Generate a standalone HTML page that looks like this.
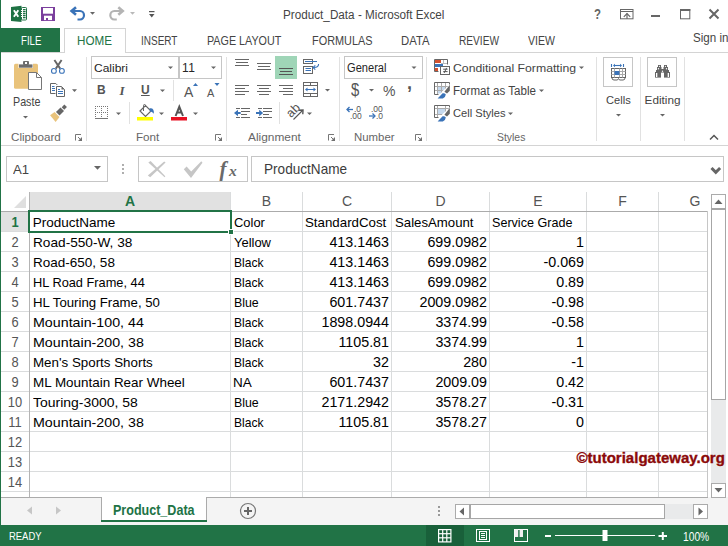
<!DOCTYPE html>
<html><head><meta charset="utf-8">
<style>
*{margin:0;padding:0;box-sizing:border-box}
html,body{width:728px;height:546px;overflow:hidden;background:#fff;position:relative;font-family:"Liberation Sans",sans-serif}
.a{position:absolute}
.t{position:absolute;white-space:nowrap;line-height:1;transform-origin:0 0}
.sep{position:absolute;width:1px;background:#e1e1e1}
.gl{position:absolute;background:#dadcdd}
.arr{position:absolute;width:0;height:0;border-left:3px solid transparent;border-right:3px solid transparent;border-top:3px solid #777}
.c{position:absolute;white-space:nowrap;font-size:13.5px;color:#000;line-height:20px;height:20px}
.n{font-size:14px;text-align:right}
.rh{position:absolute;left:1px;width:28px;text-align:center;font-size:14px;color:#555;line-height:20px;height:20px;transform:scaleX(0.92)}
.ch{position:absolute;top:192px;height:19px;text-align:center;font-size:14px;color:#555;line-height:19px}
.lbl{position:absolute;font-size:11.5px;color:#666;white-space:nowrap;line-height:1}
</style></head><body>
<!-- left window border -->
<div class="a" style="left:0;top:0;width:1px;height:546px;background:#217346;z-index:5"></div>

<!-- TITLE BAR -->

<!-- TABS -->
<div class="a" style="left:0;top:28px;width:60px;height:25px;background:#217346"></div>
<div class="a" style="left:64px;top:28px;width:62px;height:25px;border:1px solid #d4d4d4;border-bottom:none;background:#fff;z-index:2"></div>

<!-- RIBBON -->
<div class="a" style="left:1px;top:52px;width:727px;height:1px;background:#d4d4d4"></div>
<div class="a" style="left:1px;top:145px;width:727px;height:1px;background:#d4d4d4"></div>
<div class="sep" style="left:86px;top:57px;height:84px"></div>
<div class="sep" style="left:226px;top:57px;height:84px"></div>
<div class="sep" style="left:339px;top:57px;height:84px"></div>
<div class="sep" style="left:426px;top:57px;height:84px"></div>
<div class="sep" style="left:596px;top:57px;height:84px"></div>
<div class="sep" style="left:640px;top:57px;height:84px"></div>
<div class="sep" style="left:684px;top:57px;height:84px"></div>


<!-- RIBBON TEXT -->
<div class="t" style="left:97px;top:84px;font-size:12px;font-weight:bold;color:#555;z-index:7">B</div>
<div class="t" style="left:119.5px;top:84px;font-size:13px;font-style:italic;font-weight:bold;font-family:'Liberation Serif',serif;color:#555;z-index:7">I</div>
<div class="t" style="left:141px;top:84px;font-size:12px;font-weight:bold;color:#555;z-index:7;text-decoration:underline">U</div>
<div class="t" style="left:184px;top:85px;font-size:14px;color:#555;z-index:7">A</div>
<div class="t" style="left:207px;top:88px;font-size:11px;color:#555;z-index:7">A</div>
<div class="t" style="left:350.5px;top:80px;font-size:19px;color:#555;z-index:7;transform:scaleX(0.78);transform-origin:0 0">$</div>
<div class="t" style="left:383px;top:84px;font-size:14px;color:#555;z-index:7">%</div>
<div class="t" style="left:407px;top:74px;font-size:18px;font-weight:bold;color:#555;z-index:7">,</div>
<div class="t" style="left:354px;top:105px;font-size:8.5px;color:#555;z-index:7">.0</div>
<div class="t" style="left:350px;top:112px;font-size:8.5px;color:#555;z-index:7">.00</div>
<div class="t" style="left:371px;top:105px;font-size:8.5px;color:#555;z-index:7">.00</div>
<div class="t" style="left:376px;top:112px;font-size:8.5px;color:#555;z-index:7">.0</div>

<div class="t" style="left:182px;top:62px;font-size:12px;letter-spacing:0.4px;color:#262626;z-index:7">11</div>
<!-- FORMULA BAR -->
<div class="a" style="left:6px;top:156px;width:102px;height:26px;border:1px solid #c6c6c6"></div>
<div class="a" style="left:138px;top:156px;width:110px;height:26px;border:1px solid #c6c6c6"></div>
<div class="a" style="left:251px;top:156px;width:473px;height:26px;border:1px solid #c6c6c6"></div>

<!-- GRID -->
<div id="grid">
<div class="a" style="left:30px;top:192px;width:200px;height:18px;background:#e1e1e1"></div>
<div class="a" style="left:30px;top:210px;width:200px;height:2px;background:#217346;z-index:3"></div>
<svg class="a" style="left:14px;top:196px" width="12" height="12"><polygon points="12,0 12,12 0,12" fill="#dfdfdf"/></svg>
<div class="a" style="left:1px;top:211px;width:706px;height:1px;background:#ababab"></div>
<div class="a" style="left:230px;top:192px;width:1px;height:19px;background:#dadcdd"></div>
<div class="a" style="left:302px;top:192px;width:1px;height:19px;background:#dadcdd"></div>
<div class="a" style="left:391px;top:192px;width:1px;height:19px;background:#dadcdd"></div>
<div class="a" style="left:489px;top:192px;width:1px;height:19px;background:#dadcdd"></div>
<div class="a" style="left:586px;top:192px;width:1px;height:19px;background:#dadcdd"></div>
<div class="a" style="left:658px;top:192px;width:1px;height:19px;background:#dadcdd"></div>
<div class="a" style="left:29px;top:192px;width:1px;height:305px;background:#b4b4b4;z-index:2"></div>
<div class="a" style="left:1px;top:212px;width:28px;height:19px;background:#e1e1e1"></div>
<div class="ch" style="left:30px;width:200px;color:#217346;font-weight:bold">A</div>
<div class="ch" style="left:231px;width:71px;">B</div>
<div class="ch" style="left:303px;width:88px;">C</div>
<div class="ch" style="left:392px;width:97px;">D</div>
<div class="ch" style="left:490px;width:96px;">E</div>
<div class="ch" style="left:587px;width:71px;">F</div>
<div class="ch" style="left:659px;width:72px;">G</div>
<div class="gl" style="left:1px;top:231px;width:706px;height:1px"></div>
<div class="gl" style="left:1px;top:251px;width:706px;height:1px"></div>
<div class="gl" style="left:1px;top:271px;width:706px;height:1px"></div>
<div class="gl" style="left:1px;top:291px;width:706px;height:1px"></div>
<div class="gl" style="left:1px;top:311px;width:706px;height:1px"></div>
<div class="gl" style="left:1px;top:331px;width:706px;height:1px"></div>
<div class="gl" style="left:1px;top:351px;width:706px;height:1px"></div>
<div class="gl" style="left:1px;top:371px;width:706px;height:1px"></div>
<div class="gl" style="left:1px;top:391px;width:706px;height:1px"></div>
<div class="gl" style="left:1px;top:411px;width:706px;height:1px"></div>
<div class="gl" style="left:1px;top:431px;width:706px;height:1px"></div>
<div class="gl" style="left:1px;top:451px;width:706px;height:1px"></div>
<div class="gl" style="left:1px;top:471px;width:706px;height:1px"></div>
<div class="gl" style="left:1px;top:491px;width:706px;height:1px"></div>
<div class="gl" style="left:230px;top:212px;width:1px;height:285px"></div>
<div class="gl" style="left:302px;top:212px;width:1px;height:285px"></div>
<div class="gl" style="left:391px;top:212px;width:1px;height:285px"></div>
<div class="gl" style="left:489px;top:212px;width:1px;height:285px"></div>
<div class="gl" style="left:586px;top:212px;width:1px;height:285px"></div>
<div class="gl" style="left:658px;top:212px;width:1px;height:285px"></div>
<div class="a" style="left:707px;top:211px;width:1px;height:286px;background:#c6c6c6"></div>
<div class="rh" style="top:212px;color:#217346;font-weight:bold">1</div>
<div class="rh" style="top:232px;">2</div>
<div class="rh" style="top:252px;">3</div>
<div class="rh" style="top:272px;">4</div>
<div class="rh" style="top:292px;">5</div>
<div class="rh" style="top:312px;">6</div>
<div class="rh" style="top:332px;">7</div>
<div class="rh" style="top:352px;">8</div>
<div class="rh" style="top:372px;">9</div>
<div class="rh" style="top:392px;">10</div>
<div class="rh" style="top:412px;">11</div>
<div class="rh" style="top:432px;">12</div>
<div class="rh" style="top:452px;">13</div>
<div class="rh" style="top:472px;">14</div>
<div class="c" style="left:32.80px;top:213px;transform:scaleX(1.000);transform-origin:0 0">ProductName</div>
<div class="c" style="left:233.70px;top:213px;transform:scaleX(0.957);transform-origin:0 0">Color</div>
<div class="c" style="left:304.90px;top:213px;transform:scaleX(0.985);transform-origin:0 0">StandardCost</div>
<div class="c" style="left:394.50px;top:213px;transform:scaleX(0.978);transform-origin:0 0">SalesAmount</div>
<div class="c" style="left:492.10px;top:213px;transform:scaleX(0.932);transform-origin:0 0">Service Grade</div>
<div class="c" style="left:32.60px;top:233px;transform:scaleX(1.011);transform-origin:0 0">Road-550-W, 38</div>
<div class="c" style="left:233.70px;top:233px;transform:scaleX(0.959);transform-origin:0 0">Yellow</div>
<div class="c n" style="left:303px;width:86px;top:232px;transform:scaleX(1.02);transform-origin:100% 0">413.1463</div>
<div class="c n" style="left:392px;width:95px;top:232px;transform:scaleX(1.02);transform-origin:100% 0">699.0982</div>
<div class="c n" style="left:490px;width:94px;top:232px;transform:scaleX(1.02);transform-origin:100% 0">1</div>
<div class="c" style="left:32.60px;top:253px;transform:scaleX(1.001);transform-origin:0 0">Road-650, 58</div>
<div class="c" style="left:233.70px;top:253px;transform:scaleX(0.894);transform-origin:0 0">Black</div>
<div class="c n" style="left:303px;width:86px;top:252px;transform:scaleX(1.02);transform-origin:100% 0">413.1463</div>
<div class="c n" style="left:392px;width:95px;top:252px;transform:scaleX(1.02);transform-origin:100% 0">699.0982</div>
<div class="c n" style="left:490px;width:94px;top:252px;transform:scaleX(1.02);transform-origin:100% 0">-0.069</div>
<div class="c" style="left:32.60px;top:273px;transform:scaleX(0.947);transform-origin:0 0">HL Road Frame, 44</div>
<div class="c" style="left:233.70px;top:273px;transform:scaleX(0.894);transform-origin:0 0">Black</div>
<div class="c n" style="left:303px;width:86px;top:272px;transform:scaleX(1.02);transform-origin:100% 0">413.1463</div>
<div class="c n" style="left:392px;width:95px;top:272px;transform:scaleX(1.02);transform-origin:100% 0">699.0982</div>
<div class="c n" style="left:490px;width:94px;top:272px;transform:scaleX(1.02);transform-origin:100% 0">0.89</div>
<div class="c" style="left:32.60px;top:293px;transform:scaleX(0.978);transform-origin:0 0">HL Touring Frame, 50</div>
<div class="c" style="left:233.70px;top:293px;transform:scaleX(0.915);transform-origin:0 0">Blue</div>
<div class="c n" style="left:303px;width:86px;top:292px;transform:scaleX(1.02);transform-origin:100% 0">601.7437</div>
<div class="c n" style="left:392px;width:95px;top:292px;transform:scaleX(1.02);transform-origin:100% 0">2009.0982</div>
<div class="c n" style="left:490px;width:94px;top:292px;transform:scaleX(1.02);transform-origin:100% 0">-0.98</div>
<div class="c" style="left:32.60px;top:313px;transform:scaleX(1.055);transform-origin:0 0">Mountain-100, 44</div>
<div class="c" style="left:233.70px;top:313px;transform:scaleX(0.894);transform-origin:0 0">Black</div>
<div class="c n" style="left:303px;width:86px;top:312px;transform:scaleX(1.02);transform-origin:100% 0">1898.0944</div>
<div class="c n" style="left:392px;width:95px;top:312px;transform:scaleX(1.02);transform-origin:100% 0">3374.99</div>
<div class="c n" style="left:490px;width:94px;top:312px;transform:scaleX(1.02);transform-origin:100% 0">-0.58</div>
<div class="c" style="left:32.60px;top:333px;transform:scaleX(1.055);transform-origin:0 0">Mountain-200, 38</div>
<div class="c" style="left:233.70px;top:333px;transform:scaleX(0.894);transform-origin:0 0">Black</div>
<div class="c n" style="left:303px;width:86px;top:332px;transform:scaleX(1.02);transform-origin:100% 0">1105.81</div>
<div class="c n" style="left:392px;width:95px;top:332px;transform:scaleX(1.02);transform-origin:100% 0">3374.99</div>
<div class="c n" style="left:490px;width:94px;top:332px;transform:scaleX(1.02);transform-origin:100% 0">1</div>
<div class="c" style="left:32.60px;top:353px;transform:scaleX(0.989);transform-origin:0 0">Men's Sports Shorts</div>
<div class="c" style="left:233.70px;top:353px;transform:scaleX(0.894);transform-origin:0 0">Black</div>
<div class="c n" style="left:303px;width:86px;top:352px;transform:scaleX(1.02);transform-origin:100% 0">32</div>
<div class="c n" style="left:392px;width:95px;top:352px;transform:scaleX(1.02);transform-origin:100% 0">280</div>
<div class="c n" style="left:490px;width:94px;top:352px;transform:scaleX(1.02);transform-origin:100% 0">-1</div>
<div class="c" style="left:32.60px;top:373px;transform:scaleX(0.995);transform-origin:0 0">ML Mountain Rear Wheel</div>
<div class="c" style="left:233px;top:373px">NA</div>
<div class="c n" style="left:303px;width:86px;top:372px;transform:scaleX(1.02);transform-origin:100% 0">601.7437</div>
<div class="c n" style="left:392px;width:95px;top:372px;transform:scaleX(1.02);transform-origin:100% 0">2009.09</div>
<div class="c n" style="left:490px;width:94px;top:372px;transform:scaleX(1.02);transform-origin:100% 0">0.42</div>
<div class="c" style="left:32.60px;top:393px;transform:scaleX(1.034);transform-origin:0 0">Touring-3000, 58</div>
<div class="c" style="left:233.70px;top:393px;transform:scaleX(0.915);transform-origin:0 0">Blue</div>
<div class="c n" style="left:303px;width:86px;top:392px;transform:scaleX(1.02);transform-origin:100% 0">2171.2942</div>
<div class="c n" style="left:392px;width:95px;top:392px;transform:scaleX(1.02);transform-origin:100% 0">3578.27</div>
<div class="c n" style="left:490px;width:94px;top:392px;transform:scaleX(1.02);transform-origin:100% 0">-0.31</div>
<div class="c" style="left:32.60px;top:413px;transform:scaleX(1.055);transform-origin:0 0">Mountain-200, 38</div>
<div class="c" style="left:233.70px;top:413px;transform:scaleX(0.894);transform-origin:0 0">Black</div>
<div class="c n" style="left:303px;width:86px;top:412px;transform:scaleX(1.02);transform-origin:100% 0">1105.81</div>
<div class="c n" style="left:392px;width:95px;top:412px;transform:scaleX(1.02);transform-origin:100% 0">3578.27</div>
<div class="c n" style="left:490px;width:94px;top:412px;transform:scaleX(1.02);transform-origin:100% 0">0</div>
<div class="a" style="left:28px;top:210px;width:204px;height:23px;border:2px solid #217346;z-index:4"></div>
<div class="a" style="left:228px;top:229px;width:6px;height:6px;background:#217346;border:1px solid #fff;z-index:5"></div>
</div>
<!-- SHEET TABS -->
<div class="a" style="left:1px;top:497px;width:727px;height:28px;background:#f4f4f4"></div>
<div class="a" style="left:1px;top:497px;width:707px;height:1px;background:#ababab"></div>
<div class="a" style="left:708px;top:192px;width:20px;height:305px;background:#fff"></div>
<div class="a" style="left:101px;top:497px;width:106px;height:25px;background:#fff;border-right:1px solid #ababab;border-left:1px solid #ababab;border-top:none"></div>
<div class="a" style="left:101px;top:520px;width:106px;height:2px;background:#217346"></div>
<div class="a" style="left:230px;top:492px;width:1px;height:5px;background:#dadcdd"></div>
<!-- v scrollbar -->
<div class="a" style="left:711px;top:194px;width:15px;height:304px;background:#e9eaeb"></div>
<div class="a" style="left:711px;top:194px;width:15px;height:15px;background:#fff;border:1px solid #ababab"></div>
<div class="a" style="left:711px;top:208px;width:15px;height:192px;background:#fff;border:1px solid #a6a6a6;border-width:2px 1px 1px 1px"></div>
<div class="a" style="left:711px;top:483px;width:15px;height:15px;background:#fff;border:1px solid #ababab"></div>
<!-- h scrollbar -->
<div class="a" style="left:455px;top:504px;width:253px;height:15px;background:#e9eaeb"></div>
<div class="a" style="left:455px;top:504px;width:15px;height:15px;background:#fff;border:1px solid #ababab"></div>
<div class="a" style="left:469px;top:504px;width:196px;height:15px;background:#fff;border:1px solid #a6a6a6;border-width:1px 1px 1px 2px"></div>
<div class="a" style="left:693px;top:504px;width:15px;height:15px;background:#fff;border:1px solid #ababab"></div>

<!-- STATUS BAR -->
<div class="a" style="left:0;top:525px;width:728px;height:21px;background:#217346"></div>
<div class="a" style="left:426px;top:525px;width:38px;height:21px;background:#19603a"></div>
<!--TEXT-->
<div class="t" style="left:283.00px;top:8px;font-size:13.25px;color:#444;z-index:7;transform:scaleX(0.884);">Product_Data - Microsoft Excel</div>
<div class="t" style="left:594.00px;top:7px;font-size:14.5px;font-weight:bold;color:#666;z-index:7;transform:scaleX(0.791);">?</div>
<div class="t" style="left:20.60px;top:35px;font-size:12.5px;color:#fff;z-index:7;transform:scaleX(0.770);">FILE</div>
<div class="t" style="left:77.00px;top:34px;font-size:13.0px;color:#217346;z-index:7;transform:scaleX(0.897);">HOME</div>
<div class="t" style="left:141.00px;top:34px;font-size:13.0px;color:#444;z-index:7;transform:scaleX(0.769);">INSERT</div>
<div class="t" style="left:207.00px;top:34px;font-size:13.0px;color:#444;z-index:7;transform:scaleX(0.827);">PAGE LAYOUT</div>
<div class="t" style="left:311.50px;top:34px;font-size:13.0px;color:#444;z-index:7;transform:scaleX(0.838);">FORMULAS</div>
<div class="t" style="left:401.00px;top:34px;font-size:13.0px;color:#444;z-index:7;transform:scaleX(0.873);">DATA</div>
<div class="t" style="left:458.80px;top:34px;font-size:13.0px;color:#444;z-index:7;transform:scaleX(0.780);">REVIEW</div>
<div class="t" style="left:527.70px;top:34px;font-size:13.0px;color:#444;z-index:7;transform:scaleX(0.810);">VIEW</div>
<div class="t" style="left:693.00px;top:31px;font-size:13.0px;color:#444;z-index:7;transform:scaleX(0.892);">Sign in</div>
<div class="t" style="left:12.50px;top:96px;font-size:12.75px;color:#444;z-index:7;transform:scaleX(0.841);">Paste</div>
<div class="t" style="left:10.60px;top:131px;font-size:11.75px;color:#666;z-index:7;transform:scaleX(0.990);">Clipboard</div>
<div class="t" style="left:136.40px;top:131px;font-size:11.75px;color:#666;z-index:7;transform:scaleX(0.991);">Font</div>
<div class="t" style="left:247.90px;top:131px;font-size:11.75px;color:#666;z-index:7;transform:scaleX(1.011);">Alignment</div>
<div class="t" style="left:354.30px;top:131px;font-size:11.75px;color:#666;z-index:7;transform:scaleX(0.970);">Number</div>
<div class="t" style="left:497.10px;top:131px;font-size:11.75px;color:#666;z-index:7;transform:scaleX(0.887);">Styles</div>
<div class="t" style="left:94.00px;top:62px;font-size:11.75px;color:#262626;z-index:7;transform:scaleX(1.021);">Calibri</div>
<div class="t" style="left:347.30px;top:62px;font-size:12.0px;color:#262626;z-index:7;transform:scaleX(0.925);">General</div>
<div class="t" style="left:453.40px;top:62px;font-size:11.75px;color:#444;z-index:7;transform:scaleX(1.041);">Conditional Formatting</div>
<div class="t" style="left:453.40px;top:84px;font-size:13.25px;color:#444;z-index:7;transform:scaleX(0.875);">Format as Table</div>
<div class="t" style="left:453.40px;top:107px;font-size:11.75px;color:#444;z-index:7;transform:scaleX(0.947);">Cell Styles</div>
<div class="t" style="left:606.10px;top:94px;font-size:11.75px;color:#444;z-index:7;transform:scaleX(0.945);">Cells</div>
<div class="t" style="left:644.60px;top:94px;font-size:11.75px;color:#444;z-index:7;">Editing</div>
<div class="t" style="left:13.20px;top:163px;font-size:13.25px;color:#444;z-index:7;transform:scaleX(0.992);">A1</div>
<div class="t" style="left:263.90px;top:163px;font-size:13.75px;color:#3c3c3c;z-index:7;transform:scaleX(0.988);">ProductName</div>
<div class="t" style="left:8.50px;top:531px;font-size:11.0px;color:#fff;z-index:7;transform:scaleX(0.858);">READY</div>
<div class="t" style="left:682.80px;top:530px;font-size:13.0px;color:#fff;z-index:7;transform:scaleX(0.787);">100%</div>
<div class="t" style="left:113.40px;top:502px;font-size:15.0px;font-weight:bold;color:#217346;z-index:7;transform:scaleX(0.836);">Product_Data</div>
<div class="t" style="left:576.50px;top:450px;font-size:15.0px;font-weight:bold;color:#8b0a0a;z-index:9;-webkit-text-stroke:0.35px #8b0a0a;">©tutorialgateway.org</div>
<!--/TEXT-->
<!--ICONS-->
<svg class="a" style="left:0;top:0;z-index:6" width="728" height="546" viewBox="0 0 728 546">
<!-- Excel icon -->
<rect x="21.5" y="7.5" width="5" height="12.5" rx="0.8" fill="#fff" stroke="#1f7244" stroke-width="1"/>
<polygon points="11,7 21.5,5.8 21.5,22 11,21" fill="#1f7244"/>
<g fill="#1f7244"><rect x="23" y="9" width="2.6" height="1.3"/><rect x="23" y="11" width="2.6" height="1.3"/><rect x="23" y="13" width="2.6" height="1.3"/><rect x="23" y="15" width="2.6" height="1.3"/><rect x="23" y="17" width="2.6" height="1.3"/></g>
<g fill="#fff"><rect x="21" y="10" width="1" height="1"/><rect x="21" y="12" width="1" height="1"/><rect x="21" y="14" width="1" height="1"/><rect x="21" y="16" width="1" height="1"/></g>
<path d="M13.9,10.2 L18.3,16.8 M18.3,10.2 L13.9,16.8" stroke="#fff" stroke-width="1.9"/>
<!-- Save -->
<rect x="41" y="7" width="14" height="14" fill="#7b3f9d"/>
<rect x="43" y="8" width="10" height="5.7" fill="#fff"/>
<rect x="44" y="15.7" width="8" height="4.4" fill="#fff"/>
<rect x="46" y="18" width="2" height="2.1" fill="#7b3f9d"/>
<!-- Undo -->
<path d="M72,11 L80,11 A4,4.25 0 0 1 80,19.5 L77.5,19.5" fill="none" stroke="#3a73b8" stroke-width="2.2"/>
<polyline points="76,7.3 71.6,11 76,14.7" fill="none" stroke="#3a73b8" stroke-width="2.6" stroke-linejoin="miter"/>
<polygon points="90,12 95,12 92.5,14.8" fill="#666"/>
<!-- Redo -->
<path d="M122.3,11 L114.3,11 A4,4.25 0 0 0 114.3,19.5 L116.8,19.5" fill="none" stroke="#b4b4b4" stroke-width="2.2"/>
<polyline points="118.3,7.3 122.7,11 118.3,14.7" fill="none" stroke="#b4b4b4" stroke-width="2.6" stroke-linejoin="miter"/>
<polygon points="130,12 135,12 132.5,14.8" fill="#b9b9b9"/>
<!-- customize -->
<rect x="149" y="11" width="5.5" height="1.2" fill="#555"/>
<polygon points="149,14 154.5,14 151.75,17.5" fill="#555"/>
<!-- window controls -->
<rect x="620.5" y="9.5" width="12.5" height="9.3" fill="none" stroke="#666" stroke-width="1"/>
<line x1="620.5" y1="11.5" x2="633" y2="11.5" stroke="#666" stroke-width="1"/>
<line x1="627" y1="13.5" x2="627" y2="18.8" stroke="#666" stroke-width="1.2"/>
<polyline points="623.8,16.8 627,13.5 630.2,16.8" fill="none" stroke="#666" stroke-width="1.2"/>
<rect x="651" y="15" width="9" height="2" fill="#666"/>
<rect x="680.5" y="9.5" width="9.3" height="9.3" fill="none" stroke="#666" stroke-width="1"/>
<rect x="680" y="9" width="10.3" height="2" fill="#666"/>
<path d="M709.5,9.5 L718.5,18.5 M718.5,9.5 L709.5,18.5" stroke="#666" stroke-width="2"/>
<!-- Clipboard paste -->
<rect x="14" y="63.7" width="24" height="25" rx="1.5" fill="#e9c37b"/>
<rect x="18.5" y="61" width="14.5" height="7" fill="#fff"/>
<rect x="19" y="64.4" width="13.5" height="3.3" fill="#6d6d6d"/>
<rect x="23" y="61" width="6" height="4" rx="1" fill="#6d6d6d"/>
<rect x="25" y="62" width="2" height="2" fill="#fff"/>
<path d="M28.5,72.5 L36.5,72.5 L41.5,77.5 L41.5,89.5 L28.5,89.5 Z" fill="#fff" stroke="#777" stroke-width="1"/>
<path d="M36.5,72.5 L36.5,77.5 L41.5,77.5" fill="none" stroke="#777" stroke-width="1"/>
<!-- scissors -->
<path d="M54.4,60 L60.2,68.6 M61.6,60 L55.8,68.6" stroke="#666" stroke-width="1.9"/>
<circle cx="53.9" cy="70.9" r="2.4" fill="#fff" stroke="#3a73b8" stroke-width="1.1"/>
<circle cx="61.9" cy="70.9" r="2.4" fill="#fff" stroke="#3a73b8" stroke-width="1.1"/>
<!-- copy -->
<path d="M55.5,93.5 H50.5 V83.5 H55.8 L57.3,85" fill="none" stroke="#666" stroke-width="1"/>
<path d="M56.5,86.5 H61.5 L64.5,89.5 V96.5 H56.5 Z" fill="#fff" stroke="#666" stroke-width="1"/>
<polygon points="61.5,86.5 64.5,89.5 61.5,89.5" fill="#666"/>
<g stroke="#3a73b8" stroke-width="1"><line x1="52" y1="86.5" x2="54.5" y2="86.5"/><line x1="52" y1="88.5" x2="55" y2="88.5"/><line x1="52" y1="90.5" x2="55" y2="90.5"/><line x1="58" y1="89.5" x2="60" y2="89.5"/><line x1="58" y1="91.5" x2="63" y2="91.5"/><line x1="58" y1="93.5" x2="63" y2="93.5"/></g>
<polygon points="72,89.3 77,89.3 74.5,92" fill="#666"/>
<!-- format painter -->
<g transform="rotate(-45 60 111.5)">
<rect x="56.8" y="109" width="6.4" height="5" fill="#666"/>
<rect x="64.2" y="109.7" width="3.8" height="3.6" fill="#666"/>
<polygon points="55.8,108 55.8,115 49.5,115.8 50.3,107.2" fill="#e9c37b"/>
</g>
<polygon points="23,116 28,116 25.5,118.5" fill="#666"/>
<!-- Font group: dropdown boxes -->
<rect x="91.5" y="56.5" width="87" height="22" fill="#fff" stroke="#c6c6c6"/>
<rect x="178.5" y="56.5" width="43" height="22" fill="#fff" stroke="#c6c6c6"/><line x1="179.5" y1="57" x2="179.5" y2="78" stroke="#c6c6c6"/>
<polygon points="168,66.5 173,66.5 170.5,69" fill="#666"/>
<polygon points="211,66.5 216,66.5 213.5,69" fill="#666"/>
<polygon points="160,89.5 165,89.5 162.5,92" fill="#666"/>
<line x1="173.5" y1="80" x2="173.5" y2="101" stroke="#e1e1e1"/>
<polygon points="193,86 198,86 195.5,83" fill="#3a73b8"/>
<polygon points="214.5,83 219.5,83 217,86" fill="#3a73b8"/>
<!-- borders icon -->
<g fill="#777"><rect x="95" y="106" width="1" height="1"/><rect x="97" y="106" width="1" height="1"/><rect x="99" y="106" width="1" height="1"/><rect x="101" y="106" width="1" height="1"/><rect x="103" y="106" width="1" height="1"/><rect x="105" y="106" width="1" height="1"/><rect x="107" y="106" width="1" height="1"/>
<rect x="95" y="112" width="1" height="1"/><rect x="97" y="112" width="1" height="1"/><rect x="99" y="112" width="1" height="1"/><rect x="101" y="112" width="1" height="1"/><rect x="103" y="112" width="1" height="1"/><rect x="105" y="112" width="1" height="1"/><rect x="107" y="112" width="1" height="1"/>
<rect x="95" y="108" width="1" height="1"/><rect x="95" y="110" width="1" height="1"/><rect x="95" y="114" width="1" height="1"/><rect x="95" y="116" width="1" height="1"/>
<rect x="101" y="108" width="1" height="1"/><rect x="101" y="110" width="1" height="1"/><rect x="101" y="114" width="1" height="1"/><rect x="101" y="116" width="1" height="1"/>
<rect x="107" y="108" width="1" height="1"/><rect x="107" y="110" width="1" height="1"/><rect x="107" y="114" width="1" height="1"/><rect x="107" y="116" width="1" height="1"/>
<rect x="95" y="118" width="13" height="1"/></g>
<polygon points="116,112.5 121,112.5 118.5,115" fill="#666"/>
<line x1="129.5" y1="102" x2="129.5" y2="124" stroke="#e1e1e1"/>
<!-- fill color -->
<path d="M140,111 L145.5,105.5 L151,111 L145.5,116.5 Z" fill="#fff" stroke="#666" stroke-width="1.2"/>
<path d="M143.5,111 V105.5 Q143.5,104.5 144.5,104.5 Q145.5,104.5 145.5,105.5 V107" fill="none" stroke="#666" stroke-width="1"/>
<path d="M149.5,108.3 Q154.5,107.5 153.8,113.8 Q151.5,111 150,111.5 Z" fill="#3a73b8"/>
<rect x="137" y="117" width="16" height="3.5" fill="#ffff00"/>
<polygon points="159,112.5 164,112.5 161.5,115" fill="#666"/>
<!-- font color -->
<path d="M175.6,116 L179.3,106.8 L183,116 M177,112.6 L181.6,112.6" fill="none" stroke="#555" stroke-width="2"/>
<rect x="171" y="117" width="16" height="3.5" fill="#e81123"/>
<polygon points="193,112.5 198,112.5 195.5,115" fill="#666"/>
<!-- Alignment group -->
<g stroke="#666" stroke-width="1">
<line x1="235" y1="59.5" x2="249" y2="59.5"/><line x1="236" y1="62.5" x2="248" y2="62.5"/><line x1="235" y1="65.5" x2="249" y2="65.5"/>
<line x1="257" y1="63.5" x2="271" y2="63.5"/><line x1="258" y1="66.5" x2="270" y2="66.5"/><line x1="257" y1="69.5" x2="271" y2="69.5"/>
</g>
<rect x="275" y="56" width="22" height="23" fill="#9fd5b7"/>
<g stroke="#555" stroke-width="1">
<line x1="279" y1="68.5" x2="293" y2="68.5"/><line x1="280" y1="71.5" x2="292" y2="71.5"/><line x1="279" y1="74.5" x2="293" y2="74.5"/>
</g>
<g stroke="#666" stroke-width="1">
<line x1="235" y1="85.5" x2="249" y2="85.5"/><line x1="235" y1="88.5" x2="245" y2="88.5"/><line x1="235" y1="91.5" x2="249" y2="91.5"/><line x1="235" y1="94.5" x2="245" y2="94.5"/>
<line x1="257" y1="85.5" x2="271" y2="85.5"/><line x1="259" y1="88.5" x2="269" y2="88.5"/><line x1="257" y1="91.5" x2="271" y2="91.5"/><line x1="259" y1="94.5" x2="269" y2="94.5"/>
<line x1="279" y1="85.5" x2="293" y2="85.5"/><line x1="283" y1="88.5" x2="293" y2="88.5"/><line x1="279" y1="91.5" x2="293" y2="91.5"/><line x1="283" y1="94.5" x2="293" y2="94.5"/>
</g>
<!-- wrap text -->
<rect x="303.5" y="59.5" width="9" height="4" fill="#fff" stroke="#666"/>
<rect x="303.5" y="66.5" width="9" height="7" fill="#fff" stroke="#666"/>
<g stroke="#3a73b8" stroke-width="1"><line x1="305" y1="61.5" x2="317" y2="61.5"/><line x1="305.5" y1="68.5" x2="311" y2="68.5"/><line x1="305.5" y1="70.5" x2="311" y2="70.5"/></g>
<path d="M318.6,64 Q318.6,67.5 314,67.5" fill="none" stroke="#3a73b8" stroke-width="1.1"/>
<polyline points="315.3,65.3 313,67.5 315.3,69.7" fill="none" stroke="#3a73b8" stroke-width="1.1"/>
<!-- merge -->
<rect x="303.5" y="82.5" width="14" height="14" fill="none" stroke="#666"/>
<g stroke="#666"><line x1="303.5" y1="85.5" x2="317.5" y2="85.5"/><line x1="303.5" y1="93.5" x2="317.5" y2="93.5"/><line x1="310.5" y1="82.5" x2="310.5" y2="85.5"/><line x1="310.5" y1="93.5" x2="310.5" y2="96.5"/></g>
<line x1="306" y1="89.5" x2="315" y2="89.5" stroke="#3a73b8"/>
<polygon points="305,89.5 307.5,87.5 307.5,91.5" fill="#3a73b8"/><polygon points="316,89.5 313.5,87.5 313.5,91.5" fill="#3a73b8"/>
<polygon points="325,89 330,89 327.5,91.5" fill="#666"/>
<!-- indent -->
<g stroke="#666" stroke-width="1"><line x1="236" y1="108.5" x2="240" y2="108.5"/><line x1="241" y1="108.5" x2="250" y2="108.5"/><line x1="241" y1="111.5" x2="250" y2="111.5"/><line x1="241" y1="114.5" x2="247" y2="114.5"/><line x1="236" y1="117.5" x2="240" y2="117.5"/><line x1="241" y1="117.5" x2="250" y2="117.5"/></g><g stroke="#666" stroke-width="1"><line x1="258" y1="108.5" x2="262" y2="108.5"/><line x1="263" y1="108.5" x2="272" y2="108.5"/><line x1="263" y1="111.5" x2="272" y2="111.5"/><line x1="263" y1="114.5" x2="269" y2="114.5"/><line x1="258" y1="117.5" x2="262" y2="117.5"/><line x1="263" y1="117.5" x2="272" y2="117.5"/></g>
<line x1="236" y1="113" x2="240.7" y2="113" stroke="#3a73b8" stroke-width="2"/><polygon points="234,113 238,109.8 238,116.2" fill="#3a73b8"/>
<line x1="256" y1="113" x2="260.5" y2="113" stroke="#3a73b8" stroke-width="2"/><polygon points="263.2,113 259.2,109.8 259.2,116.2" fill="#3a73b8"/>
<line x1="279.5" y1="102" x2="279.5" y2="124" stroke="#e1e1e1"/>
<!-- orientation -->
<text x="0" y="0" transform="translate(291,118.2) rotate(-45)" font-family="Liberation Sans" font-size="12.5" fill="#555">ab</text>
<line x1="293.5" y1="119.5" x2="302.5" y2="110.5" stroke="#555" stroke-width="1.1"/>
<polyline points="298.8,110.2 303,110 302.8,114.2" fill="none" stroke="#555" stroke-width="1.4"/>
<polygon points="307,112.5 312,112.5 309.5,115" fill="#666"/>
<!-- Number group -->
<rect x="344.5" y="56.5" width="78" height="22" fill="#fff" stroke="#c6c6c6"/>
<polygon points="411.5,66.5 416.5,66.5 414,69" fill="#666"/>
<polygon points="369,89 374,89 371.5,91.5" fill="#666"/>
<line x1="347" y1="109.5" x2="353" y2="109.5" stroke="#3a73b8" stroke-width="1.3"/><polyline points="349.5,107 347,109.5 349.5,112" fill="none" stroke="#3a73b8" stroke-width="1.3"/>
<line x1="369" y1="116" x2="375" y2="116" stroke="#3a73b8" stroke-width="1.3"/><polyline points="372.5,113.5 375,116 372.5,118.5" fill="none" stroke="#3a73b8" stroke-width="1.3"/>
<!-- Styles icons -->
<path d="M434.5,71.5 V59.5 H447.5 V64.5" fill="none" stroke="#666" stroke-width="1"/>
<line x1="434.5" y1="71.5" x2="438.5" y2="71.5" stroke="#666"/>
<line x1="443.5" y1="60" x2="443.5" y2="64" stroke="#bbb"/><line x1="441" y1="63.5" x2="447" y2="63.5" stroke="#bbb"/>
<rect x="435" y="60" width="6" height="3" fill="#d35230"/>
<rect x="435" y="64" width="8" height="3" fill="#3a73b8"/>
<rect x="435" y="68" width="3" height="3" fill="#d35230"/>
<rect x="440.5" y="66.5" width="9" height="8" fill="#fff" stroke="#666"/>
<path d="M443.2,69.2 H447.6 M443.2,71.6 H447.6 M446.6,67.9 L444.2,72.9" stroke="#555" stroke-width="1"/>
<!-- format as table -->
<rect x="438" y="87" width="7.5" height="6.5" fill="#c5d9ee"/>
<g stroke="#aaa" stroke-width="1"><line x1="437.5" y1="83" x2="437.5" y2="94"/><line x1="441.5" y1="83" x2="441.5" y2="94"/><line x1="445.5" y1="83" x2="445.5" y2="91"/><line x1="435" y1="86.5" x2="449" y2="86.5"/><line x1="435" y1="90.5" x2="447" y2="90.5"/></g>
<path d="M434.5,94.5 V82.5 H449.5 V84.5" fill="none" stroke="#666"/><line x1="434.5" y1="94.5" x2="438.5" y2="94.5" stroke="#666"/>
<polygon points="451,83.8 451,91.5 447.5,95 443.5,99.5 436.5,99.5 442.5,91" fill="#fff"/><polygon points="449.9,84.8 449.8,90.8 447,93.6 444.4,91.8" fill="#666"/><path d="M437.6,98.4 L442.6,93.2 Q444.8,92.8 445.8,94.6 Q445.6,97.4 442.8,98.5 Z" fill="#3a73b8"/>
<!-- cell styles -->
<rect x="438" y="109" width="7.5" height="5.5" fill="#c5d9ee"/>
<g stroke="#aaa" stroke-width="1"><line x1="437.5" y1="106" x2="437.5" y2="117"/><line x1="445.5" y1="106" x2="445.5" y2="114"/><line x1="435" y1="108.5" x2="449" y2="108.5"/><line x1="435" y1="114.5" x2="445" y2="114.5"/></g>
<path d="M434.5,117.5 V105.5 H449.5 V107.5" fill="none" stroke="#666"/><line x1="434.5" y1="117.5" x2="438.5" y2="117.5" stroke="#666"/>
<polygon points="451,106.8 451,114.5 447.5,118 443.5,122.5 436.5,122.5 442.5,114" fill="#fff"/><polygon points="449.9,107.8 449.8,113.8 447,116.6 444.4,114.8" fill="#666"/><path d="M437.6,121.4 L442.6,116.2 Q444.8,115.8 445.8,117.6 Q445.6,120.4 442.8,121.5 Z" fill="#3a73b8"/>
<polygon points="579,66.5 584,66.5 581.5,69" fill="#666"/>
<polygon points="539,89.5 544,89.5 541.5,92" fill="#666"/>
<polygon points="508,112.5 513,112.5 510.5,115" fill="#666"/>
<!-- Cells / Editing -->
<rect x="603.5" y="57.5" width="29" height="29" fill="#fff" stroke="#c6c6c6"/>
<rect x="647.5" y="57.5" width="29" height="29" fill="#fff" stroke="#c6c6c6"/>
<g stroke="#3a73b8" stroke-width="1.1"><line x1="611.5" y1="64" x2="611.5" y2="67"/><line x1="623.5" y1="64" x2="623.5" y2="67"/><line x1="614" y1="65.5" x2="621" y2="65.5"/></g>
<polygon points="613,65.5 615,63.8 615,67.2" fill="#3a73b8"/><polygon points="622,65.5 620,63.8 620,67.2" fill="#3a73b8"/>
<rect x="611.5" y="68.5" width="14" height="9" fill="#fff" stroke="#666"/>
<g stroke="#aaa"><line x1="611.5" y1="71.5" x2="625.5" y2="71.5"/><line x1="611.5" y1="74.5" x2="625.5" y2="74.5"/><line x1="614.5" y1="68.5" x2="614.5" y2="77.5"/><line x1="619.5" y1="68.5" x2="619.5" y2="77.5"/><line x1="622.5" y1="68.5" x2="622.5" y2="77.5"/></g>
<rect x="614.5" y="71" width="5" height="4" fill="#3a73b8"/>
<path d="M612,78 Q612,80 614,80 L617,80 Q618,80 618.5,78.5 Q619,80 620,80 L623,80 Q625,80 625,78" fill="none" stroke="#666"/>
<g fill="#666">
<rect x="658" y="65" width="3" height="2.5"/><rect x="657" y="67" width="4.5" height="5.5"/><rect x="655" y="72" width="6" height="5.6"/><rect x="656" y="70" width="1" height="2.5"/>
<rect x="664" y="65" width="3" height="2.5"/><rect x="663.5" y="67" width="4.5" height="5.5"/><rect x="664" y="72" width="6" height="5.6"/><rect x="668" y="70" width="1" height="2.5"/>
<rect x="661" y="69" width="3" height="3.5"/>
</g>
<g fill="#fff"><rect x="656" y="73" width="1.3" height="4"/><rect x="667.7" y="73" width="1.3" height="4"/>
<circle cx="659.5" cy="66.3" r="0.6"/><circle cx="665.5" cy="66.3" r="0.6"/><circle cx="658.5" cy="68.8" r="0.7"/><circle cx="666.5" cy="68.8" r="0.7"/><circle cx="662.5" cy="71.3" r="0.7"/></g>
<polygon points="616,114 621,114 618.5,116.5" fill="#666"/>
<polygon points="660,114 665,114 662.5,116.5" fill="#666"/>
<polyline points="710,139.5 714,135.5 718,139.5" fill="none" stroke="#555" stroke-width="1.5"/>
<!-- dialog launchers -->
<path d="M75.5,140.5 V134.5 H81" fill="none" stroke="#777" stroke-width="1"/><line x1="78" y1="137" x2="80.5" y2="139.5" stroke="#777" stroke-width="1"/><polygon points="78,141 82,141 82,137" fill="#707070"/>
<path d="M215.5,140.5 V134.5 H221" fill="none" stroke="#777" stroke-width="1"/><line x1="218" y1="137" x2="220.5" y2="139.5" stroke="#777" stroke-width="1"/><polygon points="218,141 222,141 222,137" fill="#707070"/>
<path d="M328.5,140.5 V134.5 H334" fill="none" stroke="#777" stroke-width="1"/><line x1="331" y1="137" x2="333.5" y2="139.5" stroke="#777" stroke-width="1"/><polygon points="331,141 335,141 335,137" fill="#707070"/>
<path d="M415.5,140.5 V134.5 H421" fill="none" stroke="#777" stroke-width="1"/><line x1="418" y1="137" x2="420.5" y2="139.5" stroke="#777" stroke-width="1"/><polygon points="418,141 422,141 422,137" fill="#707070"/>
<!-- formula bar icons -->
<circle cx="123" cy="165" r="0.9" fill="#888"/><circle cx="123" cy="169" r="0.9" fill="#888"/><circle cx="123" cy="173" r="0.9" fill="#888"/>
<polygon points="94,166 101,166 97.5,169.8" fill="#666"/>
<polygon points="148.3,162.6 150.6,161 165.3,176.3 164.6,177.2" fill="#c6c6c6"/><polygon points="164.2,161.6 165.6,162.6 150.2,177.2 147.8,175.6" fill="#c6c6c6"/>
<polygon points="183.8,169.2 186.6,166.6 191.2,171.6 201.3,161.3 202.5,162.8 191,178" fill="#c6c6c6"/>
<text x="219.5" y="175.5" font-family="Liberation Serif" font-style="italic" font-weight="bold" font-size="21" fill="#6a6a6a">f</text>
<text x="229" y="176" font-family="Liberation Serif" font-style="italic" font-weight="bold" font-size="15.5" fill="#6a6a6a">x</text>
<polyline points="711.5,168 715.8,172.3 720.1,168" fill="none" stroke="#666" stroke-width="3"/>
<!-- bottom icons -->
<polygon points="714.5,204 722.5,204 718.5,199.5" fill="#666"/>
<polygon points="714.5,488 722.5,488 718.5,492.5" fill="#666"/>
<polygon points="459.5,511.5 464,507.5 464,515.5" fill="#666"/>
<polygon points="703,511.5 698.5,507.5 698.5,515.5" fill="#666"/>
<rect x="438" y="506" width="2" height="2" fill="#999"/><rect x="438" y="510" width="2" height="2" fill="#999"/><rect x="438" y="514" width="2" height="2" fill="#999"/>
<polygon points="27,510.5 32,506.5 32,514.5" fill="#c6c6c6"/>
<polygon points="61,510.5 56,506.5 56,514.5" fill="#c6c6c6"/>
<circle cx="248" cy="511" r="7.5" fill="none" stroke="#777" stroke-width="1.2"/>
<path d="M244,511 L252,511 M248,507 L248,515" stroke="#666" stroke-width="2"/>
<!-- status icons -->
<g stroke="#fff" stroke-width="1.2" fill="none">
<rect x="438.6" y="529.6" width="12.3" height="12.3"/>
<line x1="438.6" y1="533.7" x2="450.9" y2="533.7"/><line x1="438.6" y1="537.8" x2="450.9" y2="537.8"/>
<line x1="442.7" y1="529.6" x2="442.7" y2="541.9"/><line x1="446.8" y1="529.6" x2="446.8" y2="541.9"/>
</g>
<g stroke="#fff" stroke-width="1" fill="none">
<rect x="476.5" y="529.5" width="13" height="12"/>
<rect x="479.5" y="531.5" width="7" height="8"/>
<line x1="481" y1="533.5" x2="485" y2="533.5"/><line x1="481" y1="535.5" x2="485" y2="535.5"/><line x1="481" y1="537.5" x2="485" y2="537.5"/>
<rect x="514.5" y="529.5" width="13" height="12"/>
</g>
<rect x="514.5" y="529.5" width="3.7" height="7.5" fill="#f0f0f0"/><rect x="519.6" y="529.5" width="3.4" height="7.5" fill="#f0f0f0"/>
<rect x="545" y="535" width="6" height="2" fill="#fff"/>
<rect x="555" y="535" width="100" height="1" fill="#fff"/>
<rect x="602.5" y="530" width="5" height="11" fill="#fff"/>
<rect x="658.5" y="535" width="8.5" height="2" fill="#fff"/><rect x="661.8" y="532" width="2" height="8" fill="#fff"/>
</svg>
<!--/ICONS-->
</body></html>
